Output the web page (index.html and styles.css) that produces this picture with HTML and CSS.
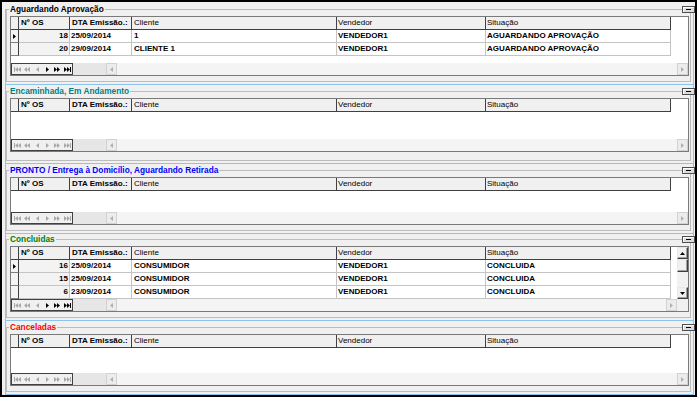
FILE: index.html
```html
<!DOCTYPE html>
<html lang="pt-BR">
<head>
    <meta charset="utf-8">
    <title>Ordens de Serviço</title>
    <link rel="stylesheet" href="styles.css">
</head>
<body>
<main class="tela">

    <!-- Aguardando aprovação -->
    <section class="painel painel-primeiro">
        <div class="grupo">
            <span class="grupo-titulo">Aguardando Aprovação</span>
            <span class="btn-min"></span>
            <div class="grade grade-s1">
                <div class="grade-corpo">
                    <div class="tabela">
                        <div class="linha cabecalho">
                            <div class="cel c-ind"></div>
                            <div class="cel c-os forte">Nº OS</div>
                            <div class="cel c-dta forte">DTA Emissão.:</div>
                            <div class="cel c-cli">Cliente</div>
                            <div class="cel c-ven">Vendedor</div>
                            <div class="cel c-sit">Situação</div>
                        </div>
                        <div class="linha">
                            <div class="cel c-ind"><svg class="seta" width="3" height="5" viewBox="0 0 3 5"><polygon points="0,0 3,2.5 0,5"/></svg></div>
                            <div class="cel c-os">18</div>
                            <div class="cel c-dta">25/09/2014</div>
                            <div class="cel c-cli">1</div>
                            <div class="cel c-ven">VENDEDOR1</div>
                            <div class="cel c-sit">AGUARDANDO APROVAÇÃO</div>
                        </div>
                        <div class="linha">
                            <div class="cel c-ind"></div>
                            <div class="cel c-os">20</div>
                            <div class="cel c-dta">29/09/2014</div>
                            <div class="cel c-cli">CLIENTE 1</div>
                            <div class="cel c-ven">VENDEDOR1</div>
                            <div class="cel c-sit">AGUARDANDO APROVAÇÃO</div>
                        </div>
                    </div>
                </div>
                <div class="rodape">
                    <div class="nav">
                        <span class="nav-btn off"><svg width="7" height="5" viewBox="0 0 7 5"><rect width="1" height="5"/><polygon points="4,0 1,2.5 4,5"/><polygon points="7,0 4,2.5 7,5"/></svg></span>
                        <span class="nav-btn off"><svg width="6" height="5" viewBox="0 0 6 5"><polygon points="3,0 0,2.5 3,5"/><polygon points="6,0 3,2.5 6,5"/></svg></span>
                        <span class="nav-btn off"><svg width="3" height="5" viewBox="0 0 3 5"><polygon points="3,0 0,2.5 3,5"/></svg></span>
                        <span class="nav-btn"><svg width="3" height="5" viewBox="0 0 3 5"><polygon points="0,0 3,2.5 0,5"/></svg></span>
                        <span class="nav-btn"><svg width="6" height="5" viewBox="0 0 6 5"><polygon points="0,0 3,2.5 0,5"/><polygon points="3,0 6,2.5 3,5"/></svg></span>
                        <span class="nav-btn"><svg width="7" height="5" viewBox="0 0 7 5"><polygon points="0,0 3,2.5 0,5"/><polygon points="3,0 6,2.5 3,5"/><rect x="6" width="1" height="5"/></svg></span>
                    </div>
                    <div class="folga"></div>
                    <div class="hbarra">
                        <span class="rolar"><svg width="3" height="5" viewBox="0 0 3 5"><polygon points="3,0 0,2.5 3,5"/></svg></span>
                        <span class="trilho"></span>
                        <span class="rolar"><svg width="3" height="5" viewBox="0 0 3 5"><polygon points="0,0 3,2.5 0,5"/></svg></span>
                    </div>
                </div>
            </div>
        </div>
    </section>

    <!-- Encaminhada -->
    <section class="painel">
        <div class="grupo">
            <span class="grupo-titulo titulo-teal">Encaminhada, Em Andamento</span>
            <span class="btn-min"></span>
            <div class="grade grade-s2">
                <div class="grade-corpo">
                    <div class="tabela">
                        <div class="linha cabecalho">
                            <div class="cel c-ind"></div>
                            <div class="cel c-os forte">Nº OS</div>
                            <div class="cel c-dta forte">DTA Emissão.:</div>
                            <div class="cel c-cli">Cliente</div>
                            <div class="cel c-ven">Vendedor</div>
                            <div class="cel c-sit">Situação</div>
                        </div>
                    </div>
                </div>
                <div class="rodape">
                    <div class="nav">
                        <span class="nav-btn off"><svg width="7" height="5" viewBox="0 0 7 5"><rect width="1" height="5"/><polygon points="4,0 1,2.5 4,5"/><polygon points="7,0 4,2.5 7,5"/></svg></span>
                        <span class="nav-btn off"><svg width="6" height="5" viewBox="0 0 6 5"><polygon points="3,0 0,2.5 3,5"/><polygon points="6,0 3,2.5 6,5"/></svg></span>
                        <span class="nav-btn off"><svg width="3" height="5" viewBox="0 0 3 5"><polygon points="3,0 0,2.5 3,5"/></svg></span>
                        <span class="nav-btn off"><svg width="3" height="5" viewBox="0 0 3 5"><polygon points="0,0 3,2.5 0,5"/></svg></span>
                        <span class="nav-btn off"><svg width="6" height="5" viewBox="0 0 6 5"><polygon points="0,0 3,2.5 0,5"/><polygon points="3,0 6,2.5 3,5"/></svg></span>
                        <span class="nav-btn off"><svg width="7" height="5" viewBox="0 0 7 5"><polygon points="0,0 3,2.5 0,5"/><polygon points="3,0 6,2.5 3,5"/><rect x="6" width="1" height="5"/></svg></span>
                    </div>
                    <div class="folga"></div>
                    <div class="hbarra">
                        <span class="rolar"><svg width="3" height="5" viewBox="0 0 3 5"><polygon points="3,0 0,2.5 3,5"/></svg></span>
                        <span class="trilho"></span>
                        <span class="rolar"><svg width="3" height="5" viewBox="0 0 3 5"><polygon points="0,0 3,2.5 0,5"/></svg></span>
                    </div>
                </div>
            </div>
        </div>
    </section>

    <!-- Pronto -->
    <section class="painel">
        <div class="grupo">
            <span class="grupo-titulo titulo-azul">PRONTO / Entrega à Domicílio, Aguardando Retirada</span>
            <span class="btn-min"></span>
            <div class="grade grade-s3">
                <div class="grade-corpo">
                    <div class="tabela">
                        <div class="linha cabecalho">
                            <div class="cel c-ind"></div>
                            <div class="cel c-os forte">Nº OS</div>
                            <div class="cel c-dta forte">DTA Emissão.:</div>
                            <div class="cel c-cli">Cliente</div>
                            <div class="cel c-ven">Vendedor</div>
                            <div class="cel c-sit">Situação</div>
                        </div>
                    </div>
                </div>
                <div class="rodape">
                    <div class="nav">
                        <span class="nav-btn off"><svg width="7" height="5" viewBox="0 0 7 5"><rect width="1" height="5"/><polygon points="4,0 1,2.5 4,5"/><polygon points="7,0 4,2.5 7,5"/></svg></span>
                        <span class="nav-btn off"><svg width="6" height="5" viewBox="0 0 6 5"><polygon points="3,0 0,2.5 3,5"/><polygon points="6,0 3,2.5 6,5"/></svg></span>
                        <span class="nav-btn off"><svg width="3" height="5" viewBox="0 0 3 5"><polygon points="3,0 0,2.5 3,5"/></svg></span>
                        <span class="nav-btn off"><svg width="3" height="5" viewBox="0 0 3 5"><polygon points="0,0 3,2.5 0,5"/></svg></span>
                        <span class="nav-btn off"><svg width="6" height="5" viewBox="0 0 6 5"><polygon points="0,0 3,2.5 0,5"/><polygon points="3,0 6,2.5 3,5"/></svg></span>
                        <span class="nav-btn off"><svg width="7" height="5" viewBox="0 0 7 5"><polygon points="0,0 3,2.5 0,5"/><polygon points="3,0 6,2.5 3,5"/><rect x="6" width="1" height="5"/></svg></span>
                    </div>
                    <div class="folga"></div>
                    <div class="hbarra">
                        <span class="rolar"><svg width="3" height="5" viewBox="0 0 3 5"><polygon points="3,0 0,2.5 3,5"/></svg></span>
                        <span class="trilho"></span>
                        <span class="rolar"><svg width="3" height="5" viewBox="0 0 3 5"><polygon points="0,0 3,2.5 0,5"/></svg></span>
                    </div>
                </div>
            </div>
        </div>
    </section>

    <!-- Concluidas -->
    <section class="painel painel-concluidas">
        <div class="grupo">
            <span class="grupo-titulo titulo-verde">Concluidas</span>
            <span class="btn-min"></span>
            <div class="grade grade-s4">
                <div class="grade-corpo">
                    <div class="tabela">
                        <div class="linha cabecalho">
                            <div class="cel c-ind"></div>
                            <div class="cel c-os forte">Nº OS</div>
                            <div class="cel c-dta forte">DTA Emissão.:</div>
                            <div class="cel c-cli">Cliente</div>
                            <div class="cel c-ven">Vendedor</div>
                            <div class="cel c-sit">Situação</div>
                        </div>
                        <div class="linha">
                            <div class="cel c-ind"><svg class="seta" width="3" height="5" viewBox="0 0 3 5"><polygon points="0,0 3,2.5 0,5"/></svg></div>
                            <div class="cel c-os">16</div>
                            <div class="cel c-dta">25/09/2014</div>
                            <div class="cel c-cli">CONSUMIDOR</div>
                            <div class="cel c-ven">VENDEDOR1</div>
                            <div class="cel c-sit">CONCLUIDA</div>
                        </div>
                        <div class="linha">
                            <div class="cel c-ind"></div>
                            <div class="cel c-os">15</div>
                            <div class="cel c-dta">25/09/2014</div>
                            <div class="cel c-cli">CONSUMIDOR</div>
                            <div class="cel c-ven">VENDEDOR1</div>
                            <div class="cel c-sit">CONCLUIDA</div>
                        </div>
                        <div class="linha">
                            <div class="cel c-ind"></div>
                            <div class="cel c-os">6</div>
                            <div class="cel c-dta">23/09/2014</div>
                            <div class="cel c-cli">CONSUMIDOR</div>
                            <div class="cel c-ven">VENDEDOR1</div>
                            <div class="cel c-sit">CONCLUIDA</div>
                        </div>
                    </div>
                    <div class="vbarra">
                        <span class="vbtn"><svg width="5" height="3" viewBox="0 0 5 3"><polygon points="0,3 2.5,0 5,3"/></svg></span>
                        <span class="polegar"></span>
                        <span class="vtrilho"></span>
                        <span class="vbtn"><svg width="5" height="3" viewBox="0 0 5 3"><polygon points="0,0 5,0 2.5,3"/></svg></span>
                    </div>
                </div>
                <div class="rodape">
                    <div class="nav">
                        <span class="nav-btn off"><svg width="7" height="5" viewBox="0 0 7 5"><rect width="1" height="5"/><polygon points="4,0 1,2.5 4,5"/><polygon points="7,0 4,2.5 7,5"/></svg></span>
                        <span class="nav-btn off"><svg width="6" height="5" viewBox="0 0 6 5"><polygon points="3,0 0,2.5 3,5"/><polygon points="6,0 3,2.5 6,5"/></svg></span>
                        <span class="nav-btn off"><svg width="3" height="5" viewBox="0 0 3 5"><polygon points="3,0 0,2.5 3,5"/></svg></span>
                        <span class="nav-btn"><svg width="3" height="5" viewBox="0 0 3 5"><polygon points="0,0 3,2.5 0,5"/></svg></span>
                        <span class="nav-btn"><svg width="6" height="5" viewBox="0 0 6 5"><polygon points="0,0 3,2.5 0,5"/><polygon points="3,0 6,2.5 3,5"/></svg></span>
                        <span class="nav-btn"><svg width="7" height="5" viewBox="0 0 7 5"><polygon points="0,0 3,2.5 0,5"/><polygon points="3,0 6,2.5 3,5"/><rect x="6" width="1" height="5"/></svg></span>
                    </div>
                    <div class="folga"></div>
                    <div class="hbarra">
                        <span class="rolar"><svg width="3" height="5" viewBox="0 0 3 5"><polygon points="3,0 0,2.5 3,5"/></svg></span>
                        <span class="trilho"></span>
                        <span class="rolar"><svg width="3" height="5" viewBox="0 0 3 5"><polygon points="0,0 3,2.5 0,5"/></svg></span>
                    </div>
                    <div class="canto"></div>
                </div>
            </div>
        </div>
    </section>

    <!-- Canceladas -->
    <section class="painel">
        <div class="grupo">
            <span class="grupo-titulo titulo-vermelho">Canceladas</span>
            <span class="btn-min"></span>
            <div class="grade grade-s5">
                <div class="grade-corpo">
                    <div class="tabela">
                        <div class="linha cabecalho">
                            <div class="cel c-ind"></div>
                            <div class="cel c-os forte">Nº OS</div>
                            <div class="cel c-dta forte">DTA Emissão.:</div>
                            <div class="cel c-cli">Cliente</div>
                            <div class="cel c-ven">Vendedor</div>
                            <div class="cel c-sit">Situação</div>
                        </div>
                    </div>
                </div>
                <div class="rodape">
                    <div class="nav">
                        <span class="nav-btn off"><svg width="7" height="5" viewBox="0 0 7 5"><rect width="1" height="5"/><polygon points="4,0 1,2.5 4,5"/><polygon points="7,0 4,2.5 7,5"/></svg></span>
                        <span class="nav-btn off"><svg width="6" height="5" viewBox="0 0 6 5"><polygon points="3,0 0,2.5 3,5"/><polygon points="6,0 3,2.5 6,5"/></svg></span>
                        <span class="nav-btn off"><svg width="3" height="5" viewBox="0 0 3 5"><polygon points="3,0 0,2.5 3,5"/></svg></span>
                        <span class="nav-btn off"><svg width="3" height="5" viewBox="0 0 3 5"><polygon points="0,0 3,2.5 0,5"/></svg></span>
                        <span class="nav-btn off"><svg width="6" height="5" viewBox="0 0 6 5"><polygon points="0,0 3,2.5 0,5"/><polygon points="3,0 6,2.5 3,5"/></svg></span>
                        <span class="nav-btn off"><svg width="7" height="5" viewBox="0 0 7 5"><polygon points="0,0 3,2.5 0,5"/><polygon points="3,0 6,2.5 3,5"/><rect x="6" width="1" height="5"/></svg></span>
                    </div>
                    <div class="folga"></div>
                    <div class="hbarra">
                        <span class="rolar"><svg width="3" height="5" viewBox="0 0 3 5"><polygon points="3,0 0,2.5 3,5"/></svg></span>
                        <span class="trilho"></span>
                        <span class="rolar"><svg width="3" height="5" viewBox="0 0 3 5"><polygon points="0,0 3,2.5 0,5"/></svg></span>
                    </div>
                </div>
            </div>
        </div>
    </section>

</main>
</body>
</html>
```

FILE: styles.css
```css
:root {
    --fundo: #f0f0f0;
    --azul: #8cc4ee;
    --linha-grupo: #bcbcbc;
    --escuro: #404040;
    --grade: #c4c4c4;
}

* {
    margin: 0;
    padding: 0;
    box-sizing: border-box;
}

body {
    font-family: "Liberation Sans", Arial, sans-serif;
    font-size: 8px;
    color: #000;
    background: var(--fundo);
}

.tela {
    width: 697px;
    height: 397px;
    border: 2px solid #000;
    padding: 7px 1px 0 3px;
    display: flex;
    flex-direction: column;
    background: var(--fundo);
}

/* paineis com moldura azul */
.painel {
    border: 1px solid var(--azul);
    border-top: 0;
    padding: 6px 2px 2px 0;
}

.painel-primeiro {
    border-top: 1px solid var(--azul);
    padding-top: 0;
}

.painel-concluidas {
    padding-top: 5px;
}

.grupo {
    position: relative;
    border: 1px solid var(--linha-grupo);
    padding: 6px 1px 5px 3px;
}

.painel-primeiro .grupo {
    border-top: 0;
}

.grupo-titulo {
    position: absolute;
    top: -5px;
    left: 2px;
    padding: 0 1px;
    font-size: 8.3px;
    line-height: 9px;
    font-weight: bold;
    white-space: nowrap;
    background: var(--fundo);
}

.titulo-teal { color: #008080; }
.titulo-azul { color: #0000ff; }
.titulo-verde { color: #008000; }
.titulo-vermelho { color: #ff0000; }

.btn-min {
    position: absolute;
    top: -4px;
    right: -5px;
    width: 13px;
    height: 7px;
    border: 1px solid #505050;
    background: #dcdcdc;
    box-shadow: inset 1px 1px #fff;
}

.btn-min::after {
    content: '';
    position: absolute;
    left: 3px;
    top: 2px;
    width: 5px;
    height: 1px;
    background: #000;
}

/* grade */
.grade {
    display: flex;
    flex-direction: column;
    border: 1px solid #7a7a7a;
    background: #fff;
}

.grade-s1 { height: 60px; }
.grade-s2 { height: 54px; margin-bottom: 3px; }
.grade-s3 { height: 48px; }
.grade-s4 { height: 66px; }
.grade-s5 { height: 52px; }

.grade-corpo {
    flex: 1;
    display: flex;
    min-height: 0;
}

.tabela {
    flex: 1;
}

.linha {
    display: flex;
    height: 13px;
}

.cel {
    flex: none;
    padding: 0 1px;
    line-height: 12px;
    font-weight: bold;
    white-space: nowrap;
    overflow: hidden;
    border-right: 1px solid var(--grade);
    border-bottom: 1px solid var(--grade);
}

.c-ind {
    width: 8px;
    padding: 0;
    background: #f4f4f4;
    border-right-color: var(--escuro);
    border-bottom-color: #808080;
    display: flex;
    align-items: center;
    padding-left: 2px;
}

.c-os {
    width: 51px;
    text-align: right;
    background: #f3f3f3;
}

.c-dta { width: 62px; }
.c-cli { width: 205px; padding-left: 2px; }
.c-ven { width: 149px; }
.c-sit { width: 185px; }

.cabecalho .cel {
    background: var(--fundo);
    border-color: var(--escuro);
    font-weight: normal;
}

.cabecalho .forte {
    font-weight: bold;
    text-align: left;
    padding-left: 2px;
}

.seta {
    fill: #000;
}

/* rodape: navegador + barra horizontal */
.rodape {
    height: 12px;
    flex: none;
    display: flex;
    background: #e6e6e6;
}

.nav {
    width: 62px;
    display: flex;
    border: 1px solid var(--escuro);
    background: var(--fundo);
}

.nav-btn {
    flex: 1;
    display: flex;
    align-items: center;
    justify-content: center;
    fill: #000;
}

.nav-btn.off {
    fill: #a8a8a8;
}

.folga {
    width: 33px;
    background: #e6e6e6;
}

.hbarra {
    flex: 1;
    display: flex;
    background: #f4f4f4;
}

.rolar {
    width: 11px;
    display: flex;
    align-items: center;
    justify-content: center;
    border: 1px solid #d2d2d2;
    background: #ececec;
    fill: #b0b0b0;
}

.trilho {
    flex: 1;
}

.canto {
    width: 11px;
    background: var(--fundo);
}

/* barra vertical (concluidas) */
.vbarra {
    width: 11px;
    display: flex;
    flex-direction: column;
    background: #f2f2f2;
}

.vbtn {
    height: 12px;
    display: flex;
    align-items: center;
    justify-content: center;
    border: 1px solid;
    border-color: #e8e8e8 var(--escuro) var(--escuro) #e8e8e8;
    background: var(--fundo);
    box-shadow: inset -1px -1px #a0a0a0;
    fill: #000;
}

.polegar {
    height: 13px;
    border: 1px solid;
    border-color: #e8e8e8 var(--escuro) var(--escuro) #e8e8e8;
    background: var(--fundo);
    box-shadow: inset -1px -1px #a0a0a0;
}

.vtrilho {
    flex: 1;
}
```
